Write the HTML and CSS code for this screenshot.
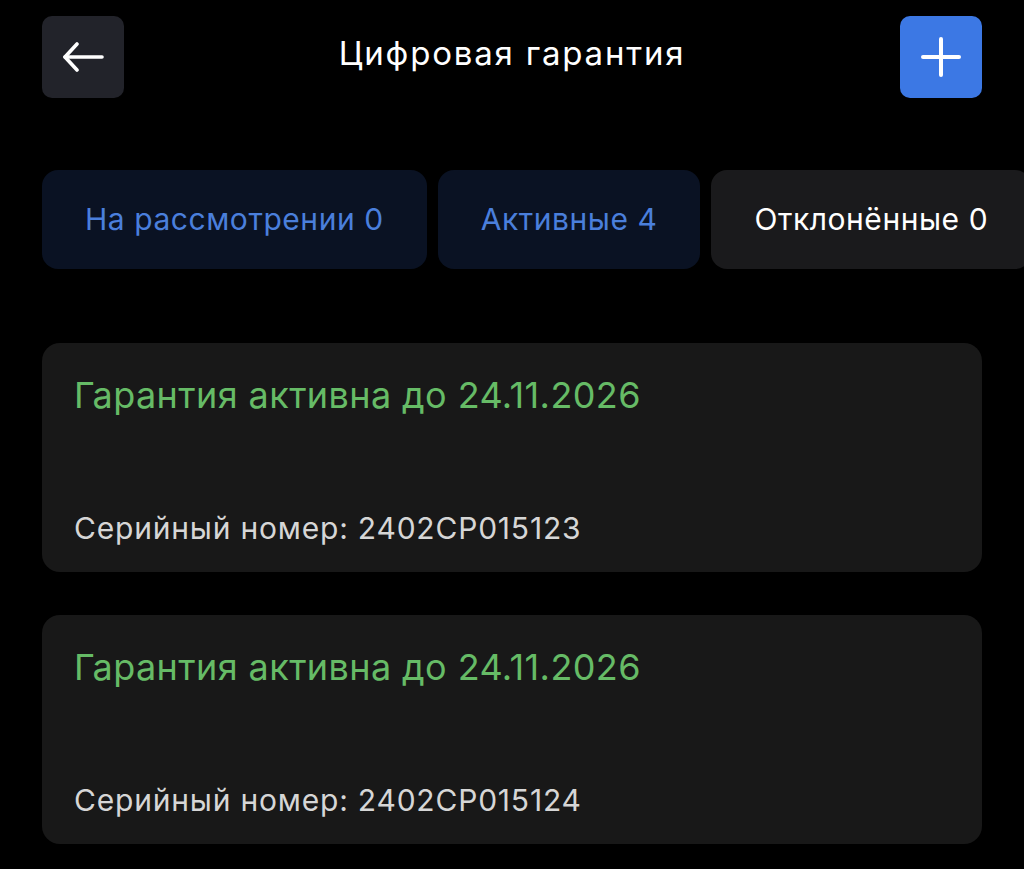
FILE: index.html
```html
<!DOCTYPE html>
<html lang="ru">
<head>
    <meta charset="UTF-8">
    <meta name="viewport" content="width=device-width, initial-scale=1.0">
    <title>Цифровая гарантия</title>
    <link rel="stylesheet" href="styles.css">
</head>
<body>

    <!-- Header -->
    <header class="top-bar">
        <button class="icon-btn back-btn" aria-label="Назад">
            <svg width="42" height="30" viewBox="0 0 42 30" fill="none" stroke="#fff" stroke-width="3.6" stroke-linecap="round" stroke-linejoin="round">
                <path d="M40 15H3"/>
                <path d="M15 2L3 15l12 13"/>
            </svg>
        </button>
        <h1 class="page-title">Цифровая гарантия</h1>
        <button class="icon-btn add-btn" aria-label="Добавить">
            <svg width="40" height="40" viewBox="0 0 40 40" fill="none" stroke="#fff" stroke-width="4" stroke-linecap="round">
                <path d="M20 2v36"/>
                <path d="M2 20h36"/>
            </svg>
        </button>
    </header>

    <!-- Status tabs -->
    <nav class="tabs">
        <div class="tab tab-blue">На рассмотрении 0</div>
        <div class="tab tab-blue">Активные 4</div>
        <div class="tab">Отклонённые 0</div>
    </nav>

    <!-- Warranty list -->
    <section class="cards">
        <div class="card">
            <h2 class="card-title">Гарантия активна до 24.11.2026</h2>
            <p class="card-serial">Серийный номер: 2402CP015123</p>
        </div>
        <div class="card">
            <h2 class="card-title">Гарантия активна до 24.11.2026</h2>
            <p class="card-serial">Серийный номер: 2402CP015124</p>
        </div>
    </section>

</body>
</html>
```

FILE: styles.css
```css
/* Basic Reset */
* {
    margin: 0;
    padding: 0;
    box-sizing: border-box;
}

body {
    font-family: 'Inter', 'Roboto', sans-serif;
    background-color: #000;
    color: #fff;
    padding: 16px 42px 0;
    overflow: hidden;
}

/* Header */
.top-bar {
    display: flex;
    justify-content: space-between;
    align-items: center;
    height: 82px;
}

.icon-btn {
    width: 82px;
    height: 82px;
    border: none;
    border-radius: 10px;
    display: flex;
    align-items: center;
    justify-content: center;
    cursor: pointer;
}

.back-btn {
    background-color: #22232a;
}

.add-btn {
    background-color: #3c78e4;
}

.page-title {
    font-size: 33px;
    font-weight: 400;
    letter-spacing: 1.8px;
    margin-bottom: 8px;
}

/* Tabs */
.tabs {
    display: flex;
    gap: 11px;
    margin-top: 72px;
    margin-right: -42px;
    overflow: hidden;
}

.tab {
    flex-shrink: 0;
    height: 99px;
    padding: 0 43px 2px;
    display: flex;
    align-items: center;
    border-radius: 16px;
    background-color: #1a1a1c;
    font-size: 30px;
    letter-spacing: 0.55px;
    white-space: nowrap;
}

.tab-blue {
    background-color: #0a1223;
    color: #4a7fdc;
}

/* Cards */
.cards {
    margin-top: 74px;
    display: flex;
    flex-direction: column;
    gap: 43px;
}

.card {
    height: 229px;
    padding: 30px 32px 26px;
    border-radius: 18px;
    background-color: #181818;
    display: flex;
    flex-direction: column;
    justify-content: space-between;
}

.card-title {
    font-size: 36px;
    font-weight: 400;
    letter-spacing: 0.4px;
    color: #66bb66;
}

.card-serial {
    font-size: 30px;
    letter-spacing: 0.8px;
    color: #d6d6d6;
}
```
